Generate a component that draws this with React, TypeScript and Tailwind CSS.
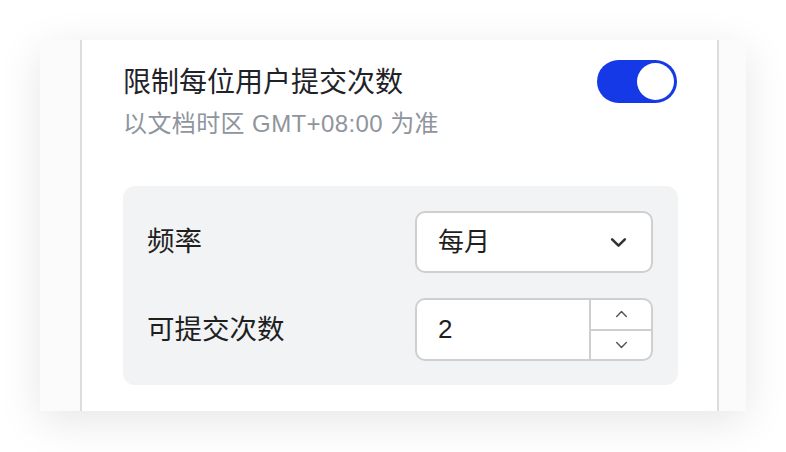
import React, { useState } from 'react';

const ChevronDown = ({ className }: { className?: string }) => (
  <svg viewBox="0 0 16 10" className={className} fill="none" stroke="currentColor" strokeLinecap="round" strokeLinejoin="round">
    <path d="M2 2l6 6 6-6" />
  </svg>
);

const ChevronUp = ({ className }: { className?: string }) => (
  <svg viewBox="0 0 16 10" className={className} fill="none" stroke="currentColor" strokeLinecap="round" strokeLinejoin="round">
    <path d="M2 8l6-6 6 6" />
  </svg>
);

const App = () => {
  const [enabled, setEnabled] = useState(true);
  const [count, setCount] = useState(2);

  return (
    <div className="min-h-screen bg-white pt-[40px] pl-[40px] font-['Liberation_Sans','Noto_Sans_CJK_SC',sans-serif]">
      <div className="w-[706px] h-[371px] bg-[#fbfbfb] pl-[40px] shadow-[0_10px_40px_rgba(0,0,0,0.10)]">
        <div className="w-[639px] h-full bg-white border-x-2 border-[#dcdcdc] pl-[41px] pt-[20px]">
          <div className="w-[555px]">
            {/* Header */}
            <div className="flex justify-between items-start">
              <div>
                <h2 className="mt-[4px] text-[28px] leading-[38px] text-[#1f2329]">限制每位用户提交次数</h2>
                <p className="mt-2 text-[24px] leading-[28px] tracking-[0.4px] text-[#8f959e]">以文档时区 GMT+08:00 为准</p>
              </div>
              <button
                type="button"
                onClick={() => setEnabled(!enabled)}
                className={`mr-px w-[80px] h-[43px] rounded-full p-[3px] flex ${enabled ? 'bg-[#1539e6] justify-end' : 'bg-[#c9cdd4] justify-start'}`}
              >
                <span className="w-[37px] h-[37px] rounded-full bg-white" />
              </button>
            </div>

            {/* Settings box */}
            <div className="mt-[48px] bg-[#f2f3f5] rounded-[12px] pl-[24px] pr-[25px] pt-[25px] pb-[24px] flex flex-col gap-[25px]">
              <div className="flex items-center justify-between">
                <span className="text-[27.5px] text-[#1f1f1f]">频率</span>
                <div className="w-[238px] h-[62px] bg-white rounded-[10px] border-2 border-[#cfcfcf] flex items-center justify-between pl-[21px] pr-[24px]">
                  <span className="text-[26px] text-[#1f1f1f]">每月</span>
                  <ChevronDown className="w-[17px] h-[11px] stroke-[2.4] text-[#333]" />
                </div>
              </div>
              <div className="flex items-center justify-between">
                <span className="text-[27.5px] text-[#1f1f1f]">可提交次数</span>
                <div className="w-[238px] h-[63px] bg-white rounded-[10px] border-2 border-[#cfcfcf] flex overflow-hidden">
                  <input
                    readOnly
                    value={count}
                    className="w-[172px] pl-[21px] text-[26px] text-[#1f1f1f] outline-none bg-transparent"
                  />
                  <div className="flex-1 flex flex-col border-l-2 border-[#cfcfcf]">
                    <button type="button" onClick={() => setCount(count + 1)} className="flex-1 flex items-center justify-center text-[#555] border-b-2 border-[#cfcfcf]">
                      <ChevronUp className="w-[13px] h-[8px] stroke-[1.8]" />
                    </button>
                    <button type="button" onClick={() => setCount(Math.max(0, count - 1))} className="flex-1 flex items-center justify-center text-[#555]">
                      <ChevronDown className="w-[13px] h-[8px] stroke-[1.8]" />
                    </button>
                  </div>
                </div>
              </div>
            </div>
          </div>
        </div>
      </div>
    </div>
  );
};

export default App;
